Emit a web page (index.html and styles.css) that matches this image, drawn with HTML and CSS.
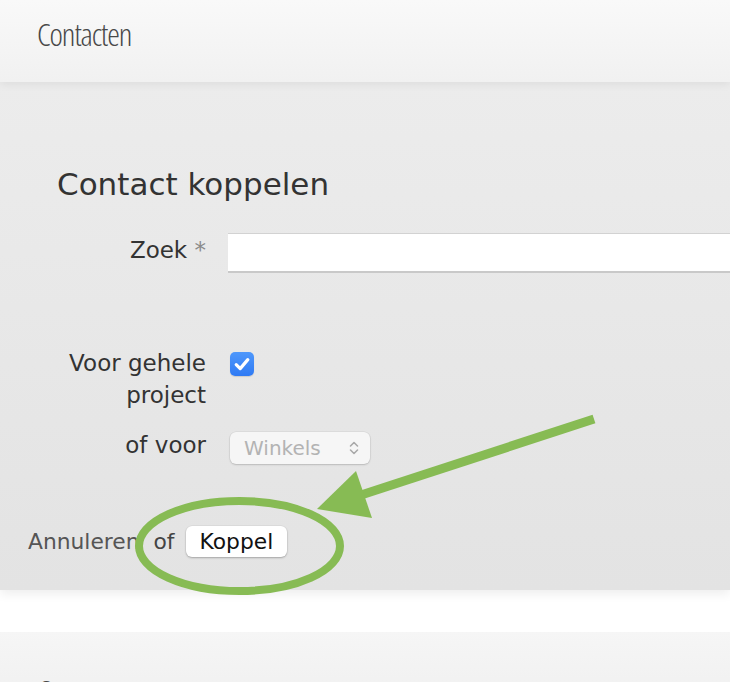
FILE: index.html
```
<!DOCTYPE html>
<html lang="nl">
<head>
<meta charset="utf-8">
<title>Contacten</title>
<link rel="stylesheet" href="styles.css">
</head>
<body>
<div class="page">
  <header class="section-head">
    <h1 class="section-title">Contacten</h1>
  </header>

  <section class="panel">
    <h2 class="form-title">Contact koppelen</h2>
    <form class="form-grid">
      <label class="label label-zoek" for="zoek">Zoek <span class="req">*</span></label>
      <div class="control control-zoek"><input id="zoek" class="text-input" type="text"></div>

      <label class="label label-project" for="project">Voor gehele<br>project</label>
      <div class="control control-project">
        <span class="checkbox" id="project">
          <svg viewBox="0 0 24 24" width="24" height="24" aria-hidden="true">
            <path d="M6.2 12.6 L10.2 16.6 L17.8 7.6" fill="none" stroke="#fff" stroke-width="3.2" stroke-linecap="round" stroke-linejoin="round"/>
          </svg>
        </span>
      </div>

      <label class="label label-voor">of voor</label>
      <div class="control control-voor">
        <span class="select">
          <span class="select-text">Winkels</span>
          <svg class="chev" viewBox="0 0 10 16" width="10" height="16" aria-hidden="true">
            <path d="M1.5 6 L5 2.5 L8.5 6 M1.5 10 L5 13.5 L8.5 10" fill="none" stroke="#a9a9a9" stroke-width="1.6" stroke-linecap="round" stroke-linejoin="round"/>
          </svg>
        </span>
      </div>
    </form>

    <div class="form-actions">
      <a class="cancel">Annuleren</a>
      <span class="of">of</span>
      <button class="btn" type="button">Koppel</button>
    </div>
  </section>

  <div class="spacer"></div>

  <header class="section-head section-head-next">
    <h1 class="section-title">Contactpersonen</h1>
  </header>

  <svg class="annotation" viewBox="0 0 730 682" width="730" height="682" aria-hidden="true">
    <ellipse cx="239.5" cy="546" rx="100.5" ry="45" fill="none" stroke="#87bb54" stroke-width="8"/>
    <line x1="594" y1="419" x2="358" y2="496" stroke="#87bb54" stroke-width="9"/>
    <polygon points="317,509 356,471 372,518" fill="#87bb54"/>
  </svg>
</div>
</body>
</html>
```

FILE: styles.css
```
* { box-sizing: border-box; }

html, body {
  margin: 0;
  padding: 0;
  background: #ffffff;
}

body {
  font-family: "DejaVu Sans", "Liberation Sans", sans-serif;
  color: #333333;
  overflow: hidden;
}

.page {
  position: relative;
  width: 730px;
  height: 682px;
  overflow: hidden;
}

.section-head {
  position: relative;
  z-index: 2;
  height: 82px;
  padding: 14px 0 0 37px;
  background: linear-gradient(#f9f9f9, #f1f1f1);
  box-shadow: 0 3px 8px rgba(0, 0, 0, 0.06);
}

.section-title {
  margin: 0;
  font-family: "Open Sans", "Noto Sans", sans-serif;
  font-weight: 300;
  font-stretch: 75%;
  font-size: 32px;
  line-height: 40px;
  letter-spacing: -1.1px;
  color: #484848;
  white-space: nowrap;
}

.section-head-next {
  padding-top: 39px;
  background: linear-gradient(#f6f6f6, #efefef);
  box-shadow: none;
}

.panel {
  position: relative;
  z-index: 1;
  height: 508px;
  padding: 84px 0 0 0;
  background: linear-gradient(#ececec, #e3e3e3);
  box-shadow: 0 4px 10px rgba(0, 0, 0, 0.07);
}

.form-title {
  margin: 0 0 31px 57px;
  font-size: 31px;
  font-weight: normal;
  line-height: 36px;
  color: #333333;
}

.form-grid {
  display: grid;
  grid-template-columns: 206px 1fr;
  column-gap: 22px;
  align-items: start;
}

.label {
  font-size: 23px;
  line-height: 32px;
  text-align: right;
  color: #333333;
  white-space: nowrap;
}

.req { color: #8a8a8a; }

.label-zoek { padding-top: 1px; }

.text-input {
  display: block;
  width: 100%;
  height: 40px;
  margin: 0;
  border: 0;
  border-top: 1px solid #d2d2d2;
  border-bottom: 2px solid #c9c9c9;
  background: #ffffff;
  outline: none;
}

.label-project,
.control-project { margin-top: 74px; }

.checkbox {
  display: flex;
  align-items: center;
  justify-content: center;
  width: 24px;
  height: 24px;
  margin: 5px 0 0 2px;
  border-radius: 5px;
  background: linear-gradient(#4f98fb, #2f7af4);
  box-shadow: 0 1px 1px rgba(0, 0, 0, 0.12);
}

.label-voor,
.control-voor { margin-top: 18px; }

.select {
  display: flex;
  align-items: center;
  justify-content: space-between;
  width: 140px;
  height: 32px;
  margin: 3px 0 0 2px;
  padding: 0 11px 0 14px;
  border-radius: 6px;
  background: #f6f6f6;
  box-shadow: 0 0 0 0.5px rgba(0, 0, 0, 0.08), 0 1px 2px rgba(0, 0, 0, 0.16);
}

.select-text {
  font-size: 20px;
  line-height: 32px;
  color: #b3b3b3;
}

.chev { display: block; }

.form-actions {
  display: flex;
  align-items: baseline;
  margin: 62px 0 0 28px;
  font-size: 21.8px;
}

.cancel {
  color: #555555;
  cursor: pointer;
}

.of {
  margin: 0 11px 0 14px;
  color: #444444;
}

.btn {
  height: 31px;
  padding: 0 14px;
  border: 0;
  border-radius: 6px;
  background: #ffffff;
  font-family: "DejaVu Sans", "Liberation Sans", sans-serif;
  font-size: 21.8px;
  line-height: 31px;
  color: #111111;
  box-shadow: 0 0 0 0.5px rgba(0, 0, 0, 0.06), 0 1px 2px rgba(0, 0, 0, 0.25);
}

.spacer {
  height: 42px;
  background: #ffffff;
}

.annotation {
  position: absolute;
  top: 0;
  left: 0;
  z-index: 5;
  pointer-events: none;
}
```
